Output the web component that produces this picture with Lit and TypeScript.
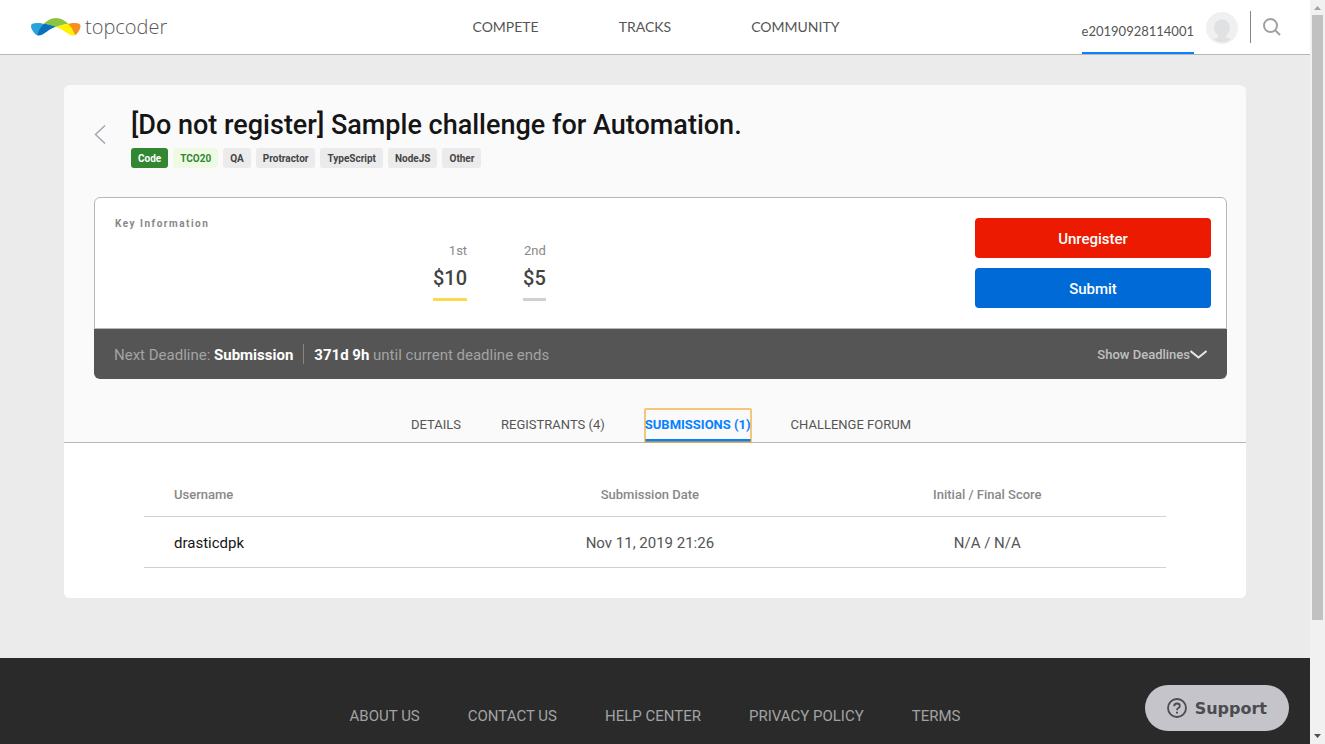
import { LitElement, html, css, svg } from "lit";
import { customElement, state } from "lit/decorators.js";
import { classMap } from "lit/directives/class-map.js";

@customElement("site-header")
class SiteHeader extends LitElement {
  static styles = css`
    :host {
      display: grid;
      grid-template-columns: 1fr auto 1fr;
      box-sizing: border-box;
      height: 55px;
      padding: 0 29px 0 31px;
      background: #fff;
      border-bottom: 1px solid #b7b7b7;
      color: #555;
      font-family: Lato, sans-serif;
    }
    a { color: inherit; text-decoration: none; }
    .logo { align-self: center; display: flex; }
    .mark { display: block; margin: 3px 4px 0 0; }
    .word { font: 300 20px/24px "Open Sans", sans-serif; color: #58595b; }
    nav { display: flex; gap: 80px; align-items: center; font-size: 14px; line-height: 20px; }
    .user { display: flex; justify-content: flex-end; }
    .handle {
      box-sizing: border-box;
      height: 54px;
      padding-top: 21px;
      border-bottom: 2px solid #0681ff;
      font-size: 13px;
      line-height: 20px;
      margin-right: 12px;
    }
    .avatar { margin: 12px 12px 0 0; width: 32px; height: 32px; }
    .search {
      margin-top: 11px;
      height: 32px;
      padding: 0 0 0 12px;
      border: 0;
      border-left: 1px solid #858585;
      background: none;
    }
    .search svg { display: block; }
  `;
  render() {
    return html`
      <a class="logo" href="#">
        <svg class="mark" width="50" height="18" viewBox="0 0 50 18">
          <path d="M6 17.300C3 15.500 0 11 0 8C0 5.800 2 5 6 5C9 5 11.500 5.400 14 6.200C11 9 8.500 13 6 17.300Z" fill="#27a3dd" />
          <path d="M12.500 5.800C16 3 20 0 25 0C30 0 34 3 37.500 5.800C33 6.500 29 7.500 25 9C21 7.500 17 6.500 12.500 5.800Z" fill="#8bc540" />
          <path d="M6 17.300C8 12 10 8 13.500 5.800C17 6.300 21 7.300 25 8.800C19 10.500 14.500 15 11 16.800Q8.500 18 6 17.300Z" fill="#0a71b9" />
          <path d="M44 17.300C47 15.500 49.500 11 49.500 8C49.500 5.800 47.500 5 44 5C41 5 38.500 5.400 36.500 6.200C39.500 9 42 13 44 17.300Z" fill="#f78e20" />
          <path d="M44 17.300C42 12 40 8 36.500 5.800C32 6.500 28 8 24 9C31 10.500 35.500 15 39 16.800Q41.500 18 44 17.300Z" fill="#fff200" />
        </svg>
        <span class="word">topcoder</span>
      </a>
      <nav>
        <a href="#">COMPETE</a><a href="#">TRACKS</a><a href="#">COMMUNITY</a>
      </nav>
      <div class="user">
        <a class="handle" href="#">e20190928114001</a>
        <svg class="avatar" viewBox="0 0 32 32">
          <circle cx="16" cy="16" r="16" fill="#f0f0f0" />
          <path d="M16 7.500a8 8 0 0 1 8 8c0 4-2 6-4 8v2q3 .5 5 2A16 16 0 0 1 7 27.500q2-1.500 5-2v-2c-2-2-4-4-4-8a8 8 0 0 1 8-8Z" fill="#e0e1e3" />
        </svg>
        <button class="search" aria-label="Search">
          <svg width="18" height="18" viewBox="0 0 18 18" fill="none" stroke="#a0a0a0" stroke-width="2">
            <circle cx="7.500" cy="7.500" r="6.500" /><path d="M12 12L17 17" />
          </svg>
        </button>
      </div>
    `;
  }
}

@customElement("challenge-header")
class ChallengeHeader extends LitElement {
  static styles = css`
    :host { display: block; padding: 20px 19px 0 30px; }
    .intro { display: flex; }
    .back { width: 37px; padding-top: 20px; }
    .back svg { display: block; }
    h1 { margin: 0; font-size: 27px; line-height: 40px; font-weight: 500; color: #151516; }
    .tags { display: flex; gap: 5px; margin-top: 3px; }
    .tag {
      padding: 1px 7px 0;
      border-radius: 3px;
      background: #ebebeb;
      color: #444;
      font-size: 10px;
      line-height: 19px;
      font-weight: 700;
      text-decoration: none;
    }
    .track { background: #328732; color: #fff; }
    .event { background: #effae5; color: #328732; }
    .info {
      display: grid;
      grid-template-columns: 1fr 236px;
      margin-top: 29px;
      padding: 20px 15px 20px 20px;
      background: #fff;
      border: 1px solid #b7b7b7;
      border-radius: 6px 6px 0 0;
    }
    h2 { margin: 0; font-size: 10px; line-height: 12px; font-weight: 700; letter-spacing: 1.5px; color: #888; }
    .prizes { display: flex; gap: 56px; margin: 11px 0 0 318px; }
    .prize { display: flex; flex-direction: column; text-align: right; }
    .place { font-size: 13px; line-height: 20px; color: #888; }
    .amount { margin-top: 4px; padding-bottom: 7px; border-bottom: 3px solid #d1d0cf; font-size: 20px; line-height: 26px; font-weight: 500; color: #434343; }
    .gold { border-color: #fdd74c; }
    .actions { display: grid; gap: 10px; }
    .action { height: 40px; padding: 2px 0 0; border: 0; border-radius: 4px; color: #fff; font: 500 15px Roboto, sans-serif; }
    .leave { background: #eb1a00; }
    .submit { background: #006ad7; }
    .deadline {
      display: flex;
      align-items: center;
      height: 50px;
      padding: 0 20px;
      background: #555;
      color: #a3a3a3;
      border-radius: 0 0 6px 6px;
      font-size: 15px;
      line-height: 20px;
    }
    .deadline span { line-height: 22px; height: 20px; }
    .deadline b { color: #fff; font-weight: 700; }
    .left { margin-left: 10px; padding-left: 10px; border-left: 1px solid #868686; }
    .toggle {
      display: flex;
      align-items: center;
      margin-left: auto;
      padding: 0;
      border: 0;
      background: none;
      color: #c0c0c0;
      font: 500 13px Roboto, sans-serif;
    }
  `;
  render() {
    return html`
      <div class="intro">
        <a class="back" href="#" aria-label="Back">
          <svg width="12" height="19" viewBox="0 0 12 19" fill="none" stroke="#a3a3ae" stroke-width="1.400">
            <path d="M11 0.500L1.500 9.500L11 18.500" />
          </svg>
        </a>
        <div>
          <h1>[Do not register] Sample challenge for Automation.</h1>
          <div class="tags">
            <a class="tag track" href="#">Code</a><a class="tag event" href="#">TCO20</a>
            ${["QA", "Protractor", "TypeScript", "NodeJS", "Other"].map((t) => html`<a class="tag" href="#">${t}</a>`)}
          </div>
        </div>
      </div>
      <div class="info">
        <div>
          <h2>Key Information</h2>
          <div class="prizes">
            <div class="prize"><span class="place">1st</span><span class="amount gold">$10</span></div>
            <div class="prize"><span class="place">2nd</span><span class="amount">$5</span></div>
          </div>
        </div>
        <div class="actions">
          <button class="action leave">Unregister</button>
          <button class="action submit">Submit</button>
        </div>
      </div>
      <div class="deadline">
        <span>Next Deadline: <b>Submission</b></span>
        <span class="left"><b>371d 9h</b> until current deadline ends</span>
        <button class="toggle">
          Show Deadlines
          <svg width="17" height="9" viewBox="0 0 17 9" fill="none" stroke="#e6e6e6" stroke-width="2">
            <path d="M0.500 1L8.500 7.500L16.500 1" />
          </svg>
        </button>
      </div>
    `;
  }
}

@customElement("challenge-tabs")
class ChallengeTabs extends LitElement {
  @state() private active = 2;
  private tabs = ["DETAILS", "REGISTRANTS (4)", "SUBMISSIONS (1)", "CHALLENGE FORUM"];
  static styles = css`
    :host {
      display: flex;
      justify-content: center;
      gap: 40px;
      padding: 30px 0 0 12px;
      border-bottom: 1px solid #b7b7b7;
    }
    .tab {
      box-sizing: border-box;
      height: 33px;
      padding: 2px 0 0;
      border: 0;
      border-bottom: 3px solid transparent;
      background: none;
      color: #555;
      font: 13px/28px Roboto, sans-serif;
    }
    .active {
      color: #0681ff;
      border-color: #0681ff;
      font-weight: 700;
      border-radius: 1px;
      outline: 2px solid rgba(236, 165, 40, 0.6);
      outline-offset: -1px;
    }
  `;
  render() {
    return this.tabs.map(
      (t, i) => html`<button class=${classMap({ tab: true, active: i === this.active })} @click=${() => (this.active = i)}>${t}</button>`
    );
  }
}

@customElement("submission-list")
class SubmissionList extends LitElement {
  static styles = css`
    :host { display: block; padding: 30px 80px; background: #fff; border-radius: 0 0 6px 6px; }
    table { width: 100%; table-layout: fixed; border-collapse: separate; border-spacing: 0; }
    th, td { padding: 0; border-bottom: 1px solid #d1d1d1; text-align: center; }
    th { height: 43px; font-size: 13px; font-weight: 500; color: #888; }
    td { height: 48px; padding-top: 2px; font-size: 15px; color: #555; }
    .name { width: 33%; padding-left: 30px; box-sizing: border-box; text-align: left; }
    .date { width: 33%; }
    .score { padding-right: 10px; }
    a { color: #151516; text-decoration: none; }
  `;
  render() {
    return html`
      <table>
        <thead>
          <tr><th class="name">Username</th><th class="date">Submission Date</th><th class="score">Initial / Final Score</th></tr>
        </thead>
        <tbody>
          <tr><td class="name"><a href="#">drasticdpk</a></td><td class="date">Nov 11, 2019 21:26</td><td class="score">N/A / N/A</td></tr>
        </tbody>
      </table>
    `;
  }
}

@customElement("app-root")
class AppRoot extends LitElement {
  static styles = css`
    :host { display: flex; height: 100vh; overflow: hidden; font-family: Roboto, sans-serif; }
    .page { flex: 1; min-width: 0; display: flex; flex-direction: column; background: #ebebeb; }
    main { margin: 30px 64px 60px; background: #fafafa; border-radius: 6px; }
    footer {
      flex: 1;
      display: flex;
      justify-content: center;
      align-items: flex-start;
      gap: 48px;
      padding-top: 48px;
      background: #2a2a2a;
      font-size: 15px;
      line-height: 20px;
    }
    footer a { color: #a3a3a3; text-decoration: none; }
    .scroll { display: flex; flex-direction: column; align-items: center; width: 15px; background: #f1f1f1; }
    .thumb { flex: 1; width: 11px; margin: 0 0 109px; background: #c1c1c1; }
    .arrow { display: block; }
    .support {
      position: fixed;
      right: 36px;
      bottom: 13px;
      display: flex;
      align-items: center;
      gap: 8px;
      height: 46px;
      padding: 0 22px;
      border: 0;
      border-radius: 23px;
      background: #c5c4ca;
      color: #4b4b50;
      font: 700 16px "DejaVu Sans", sans-serif;
    }
  `;
  private arrow(d: string, fill: string) {
    return html`<svg class="arrow" width="15" height="15" viewBox="0 0 15 15">${svg`<path d=${d} fill=${fill} />`}</svg>`;
  }
  render() {
    return html`
      <div class="page">
        <site-header></site-header>
        <main>
          <challenge-header></challenge-header>
          <challenge-tabs></challenge-tabs>
          <submission-list></submission-list>
        </main>
        <footer>
          ${["ABOUT US", "CONTACT US", "HELP CENTER", "PRIVACY POLICY", "TERMS"].map((t) => html`<a href="#">${t}</a>`)}
        </footer>
      </div>
      <div class="scroll" aria-hidden="true">
        ${this.arrow("M4 10L7.500 6L11 10Z", "#a3a3a3")}
        <div class="thumb"></div>
        ${this.arrow("M4 5L7.500 9L11 5Z", "#505050")}
      </div>
      <button class="support">
        <svg width="20" height="20" viewBox="0 0 20 20" fill="none" stroke="currentColor" stroke-width="1.800">
          <circle cx="10" cy="10" r="9" />
          <path d="M7.200 8.200Q7.200 5.500 10 5.500Q12.800 5.500 12.800 7.900Q12.800 9.300 11.300 10Q10 10.700 10 12.300" />
          <path d="M10 13.700V15.500" stroke-width="2" />
        </svg>
        Support
      </button>
    `;
  }
}
